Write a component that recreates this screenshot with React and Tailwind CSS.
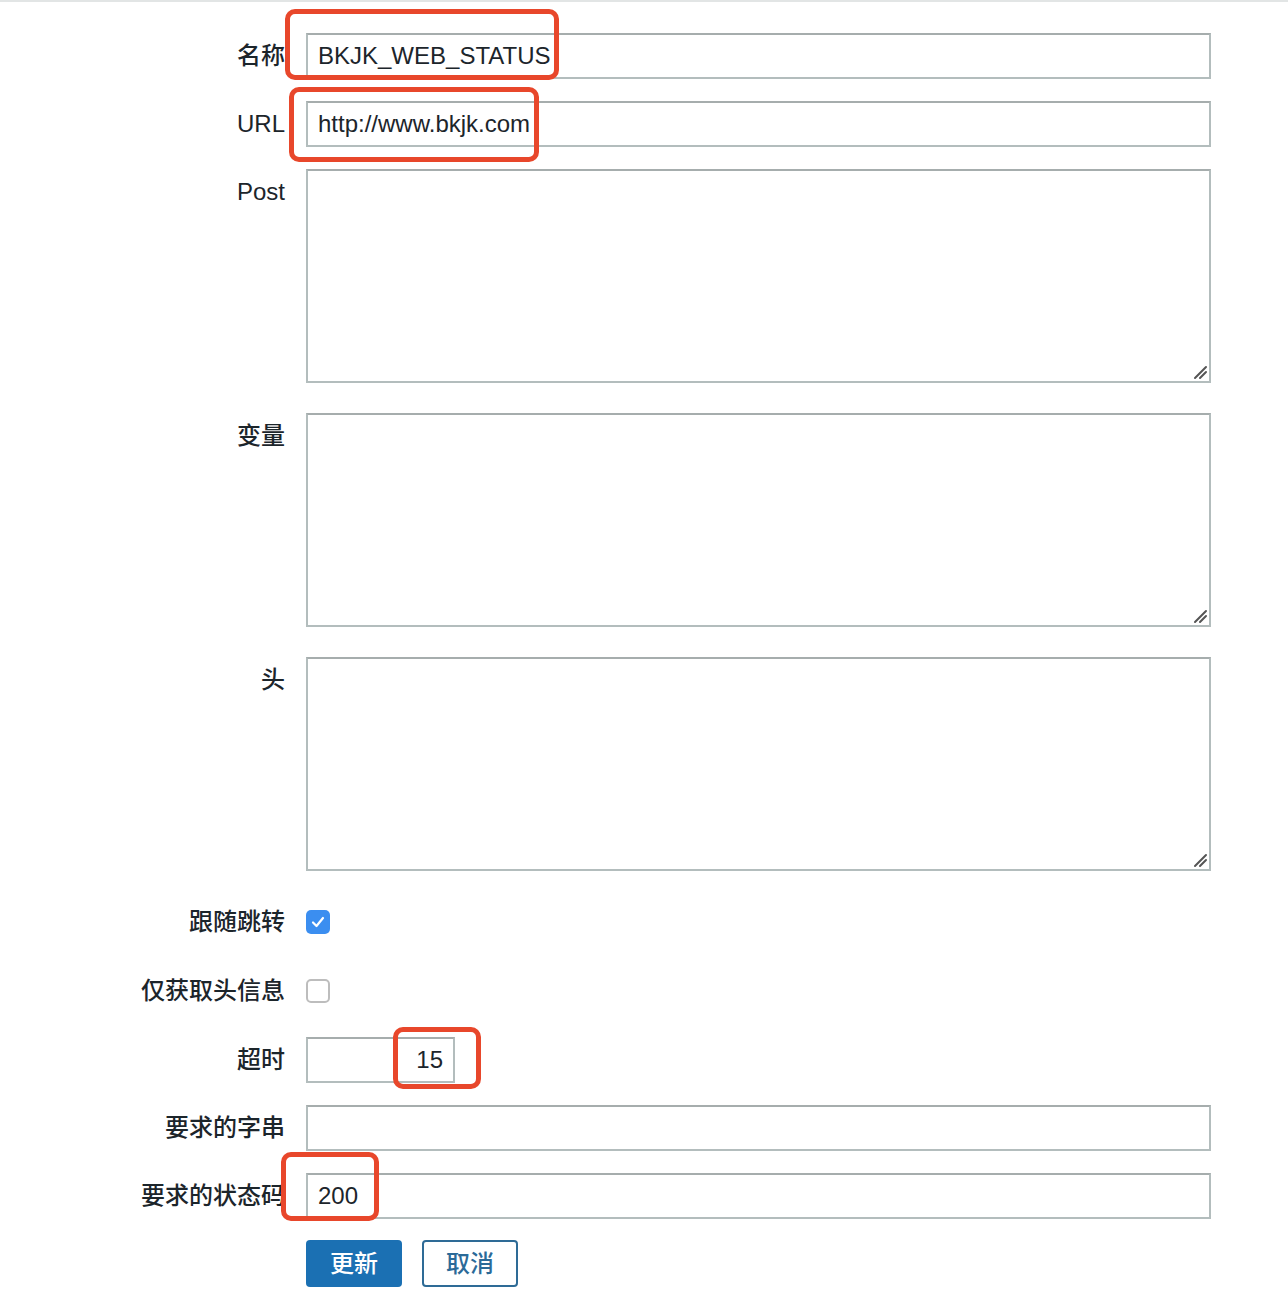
import React from 'react';

const font = { fontFamily: '"Liberation Sans", "Noto Sans CJK SC", sans-serif' };

const inputCls = "h-[46px] border-2 border-[#b3bdbd] border-t-[#a6adad] bg-white px-[10px] text-[24px] text-[#1c252b] outline-none";
const areaCls = "block h-[214px] w-[905px] resize-none border-2 border-[#b3bdbd] border-t-[#a6adad] bg-white px-[10px] py-2 text-[24px] text-[#1c252b] outline-none";

const Row = ({ label, children, className = "" }) => (
    <div className={`flex items-start gap-[21px] ${className}`}>
        <div className="flex h-[46px] w-[285px] shrink-0 items-center justify-end whitespace-nowrap text-[24px] font-medium text-[#1c252b]">{label}</div>
        {children}
    </div>
);

const Area = () => (
    <div className="relative">
        <textarea className={areaCls} />
        <svg className="pointer-events-none absolute bottom-[3px] right-[3px]" width="16" height="16" viewBox="0 0 16 16">
            <path d="M3 14 L14 3 M8 14 L14 8" stroke="#555" strokeWidth="2" strokeLinecap="round" />
        </svg>
    </div>
);

const Checkbox = ({ checked }) => (
    <div className="flex h-[46px] items-center">
        {checked ? (
            <div className="flex h-[24px] w-[24px] items-center justify-center rounded-[5px] bg-[#3b8ef0]">
                <svg width="16" height="16" viewBox="0 0 16 16">
                    <path d="M3 8.5 L6.5 12 L13 4" fill="none" stroke="white" strokeWidth="2.2" strokeLinecap="round" strokeLinejoin="round" />
                </svg>
            </div>
        ) : (
            <div className="h-[24px] w-[24px] rounded-[5px] border-2 border-[#bdbdbd] bg-white" />
        )}
    </div>
);

const Mark = ({ className }) => (
    <div className={`pointer-events-none absolute rounded-[10px] border-[5px] border-[#e8472b] ${className}`} />
);

export default function App() {
    return (
        <div className="relative min-h-[1310px] w-[1288px] border-t-2 border-[#e2e5e5] bg-white" style={font}>
            <div className="flex flex-col pt-[31px]">
                <Row label="名称">
                    <input className={`${inputCls} w-[905px]`} defaultValue="BKJK_WEB_STATUS" />
                </Row>
                <Row label="URL" className="mt-[22px]">
                    <input className={`${inputCls} w-[905px]`} defaultValue="http://www.bkjk.com" />
                </Row>
                <Row label="Post" className="mt-[22px]">
                    <Area />
                </Row>
                <Row label="变量" className="mt-[30px]">
                    <Area />
                </Row>
                <Row label="头" className="mt-[30px]">
                    <Area />
                </Row>
                <Row label="跟随跳转" className="mt-[28px]">
                    <Checkbox checked />
                </Row>
                <Row label="仅获取头信息" className="mt-[23px]">
                    <Checkbox />
                </Row>
                <Row label="超时" className="mt-[23px]">
                    <input className={`${inputCls} w-[149px] text-right`} defaultValue="15" />
                </Row>
                <Row label="要求的字串" className="mt-[22px]">
                    <input className={`${inputCls} w-[905px]`} defaultValue="" />
                </Row>
                <Row label="要求的状态码" className="mt-[22px]">
                    <input className={`${inputCls} w-[905px]`} defaultValue="200" />
                </Row>
                <div className="mt-[21px] flex gap-[20px] pl-[306px]">
                    <button className="h-[47px] w-[96px] rounded-[4px] bg-[#1b70b3] text-[24px] font-medium text-white">更新</button>
                    <button className="h-[47px] w-[96px] rounded-[4px] border-2 border-[#2e6b96] bg-white text-[24px] font-medium text-[#2b6a98]">取消</button>
                </div>
            </div>

            <Mark className="left-[285px] top-[7px] h-[71px] w-[274px]" />
            <Mark className="left-[289px] top-[85px] h-[75px] w-[250px]" />
            <Mark className="left-[393px] top-[1025px] h-[62px] w-[88px]" />
            <Mark className="left-[281px] top-[1150px] h-[69px] w-[98px]" />
        </div>
    );
}
